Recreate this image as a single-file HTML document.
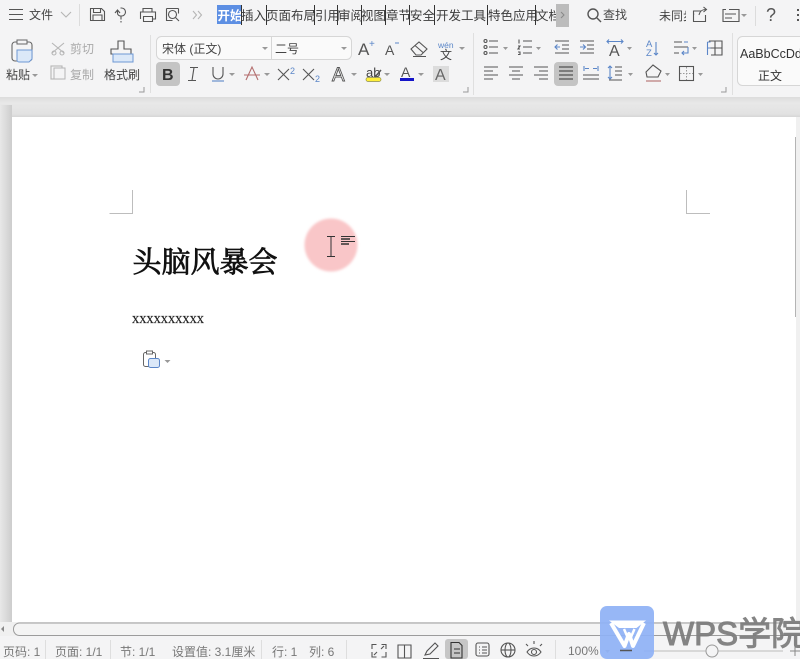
<!DOCTYPE html>
<html lang="zh">
<head>
<meta charset="utf-8">
<style>
html,body{margin:0;padding:0;background:#fff}
body{width:800px;height:659px;overflow:hidden;position:relative}
svg{position:absolute;left:0;top:0;display:block;font-size:12px}
text{font-family:"Liberation Sans","Noto Sans CJK SC",sans-serif;fill:#444}
.i{fill:none;stroke:#555;stroke-width:1.1}
.b{fill:none;stroke:#5b86c8;stroke-width:1.1}
.g{fill:none;stroke:#b5b5b5;stroke-width:1.1}
.tab{font-size:12.5px;fill:#3a3a3a}
.sb{font-size:12px;fill:#777}
.d{fill:#999;stroke:none}
</style>
</head>
<body>
<svg width="800" height="659" viewBox="0 0 800 659" xmlns="http://www.w3.org/2000/svg">
<defs>
<linearGradient id="lg" x1="0" x2="1" y1="0" y2="0"><stop offset="0" stop-color="#e8e8e8"/><stop offset="1" stop-color="#cdcdcd"/></linearGradient>
<linearGradient id="sh" x1="0" x2="0" y1="0" y2="1"><stop offset="0" stop-color="#dcdcdc"/><stop offset=".3" stop-color="#e8e8e8"/><stop offset=".85" stop-color="#e2e2e2"/><stop offset="1" stop-color="#d6d6d6"/></linearGradient>
<filter id="bl" x="-20%" y="-20%" width="140%" height="140%"><feGaussianBlur stdDeviation="1.200"/></filter>
<clipPath id="tabclip"><rect x="530" y="0" width="26" height="30"/></clipPath>
</defs>

<!-- backgrounds -->
<rect width="800" height="659" fill="#e8e8e8"/>
<rect width="800" height="98" fill="#f4f4f5"/>
<rect y="97" width="800" height="20" fill="url(#sh)"/>
<rect y="105" width="12" height="517" fill="url(#lg)"/>
<rect x="12" y="117" width="784" height="505" fill="#fff"/>
<rect x="796" y="117" width="4" height="505" fill="#f0f0f0"/>
<path d="M795.500 137V317" stroke="#b4b4b4"/>

<!-- top row -->
<path class="i" d="M9 9.500H23M9 14.500H23M9 19.500H23"/>
<text x="29" y="19">文件</text>
<path class="g" d="M61 12l5 5 5-5"/>
<path d="M79.500 4V26" stroke="#dcdcdc"/>
<path class="i" d="M90.500 8.500h11l3 3v9h-14zM93.500 8.500v4h7v-4M93 20v-5h9v5"/>
<path class="i" d="M115 13l2.500-3 2.500 3M117.500 10v3a3 3 0 0 0 3 3h1a4 4 0 0 0 0-8h-1M121 16v3.500M121 21v1.500"/>
<path class="i" d="M143 12V8.500h9V12M140.500 19v-7h15v7h-3M143.500 16.500h9v5h-9z"/>
<path class="i" d="M166.500 8.500h12M166.500 8.500v12h6M178.500 8.500v5"/>
<circle class="i" cx="172.500" cy="14.500" r="4"/>
<path class="i" d="M175.500 17.500l3.500 3.500"/>
<path class="g" d="M193 11l3.500 4-3.500 4M198 11l3.500 4-3.500 4"/>

<!-- tabs -->
<rect x="217" y="5" width="24" height="19" fill="#5d8fe3"/>
<text x="217.500" y="20" class="tab" style="fill:#fff;font-weight:bold">开始</text>
<text x="241" y="20" class="tab">插入</text>
<text x="266" y="20" class="tab">页面布局</text>
<text x="315" y="20" class="tab">引用</text>
<text x="338" y="20" class="tab">审阅</text>
<text x="361" y="20" class="tab">视图</text>
<text x="386" y="20" class="tab">章节</text>
<text x="410" y="20" class="tab">安全</text>
<text x="436" y="20" class="tab">开发工具</text>
<text x="488" y="20" class="tab">特色应用</text>
<g clip-path="url(#tabclip)"><text x="536" y="20" class="tab">文档</text></g>
<path stroke="#333" stroke-width="1" d="M241.500 5V25M266.500 5V25M314.500 5V25M337.500 5V25M361.500 5V25M385.500 5V25M409.500 5V25M434.500 5V25M487.500 5V25M535.500 5V25"/>
<rect x="556" y="4" width="13" height="23" fill="#bcbcbc"/>
<path d="M561 12l3 3-3 3" fill="none" stroke="#888"/>

<circle cx="593" cy="14" r="5" fill="none" stroke="#555" stroke-width="1.400"/>
<path fill="none" stroke="#555" stroke-width="1.400" d="M597 18l4 4"/>
<text x="603" y="19">查找</text>
<text x="659" y="20">未同步</text>
<rect x="686" y="0" width="7" height="30" fill="#f4f4f5"/>
<path class="i" d="M701 11h-7.500v10.500h12V15M699 15c1-4 3-5.500 7-5.500M703.500 7l3 2.500-3 2.500"/>
<path class="i" d="M726 9.500h-3v2M723 9v12.500h16V9.500h-10M725 14h11M725 18h7"/>
<path class="d" d="M741 14h6l-3 3z"/>
<path d="M755.500 6V26" stroke="#dcdcdc"/>
<text x="766" y="21" font-size="18" style="fill:#555">?</text>
<path stroke="#555" stroke-width="2" stroke-dasharray="2 3" d="M798 9V24"/>

<!-- clipboard group -->
<rect x="12" y="42" width="20" height="19" rx="3" fill="none" stroke="#666" stroke-width="1.100"/>
<rect x="17" y="40" width="10" height="4" fill="#f4f4f5" stroke="#666"/>
<path d="M17 50h15v9l-3 3H19a2 2 0 0 1-2-2z" fill="#dbe8f8" stroke="#6e98d4"/>
<text x="6" y="79">粘贴</text>
<path class="d" d="M32 74h6l-3 3z"/>
<path class="g" d="M52 43l12 10M64 43l-12 10"/>
<circle class="g" cx="54" cy="53" r="2"/><circle class="g" cx="62" cy="53" r="2"/>
<text x="70" y="53" style="fill:#aaa">剪切</text>
<rect class="g" x="51" y="66" width="11" height="13"/>
<rect x="54" y="68" width="11" height="11" fill="#f4f4f5" stroke="#b5b5b5"/>
<text x="70" y="79" style="fill:#aaa">复制</text>
<path class="i" d="M118 41h6v8h7v5h-20v-5h7z"/>
<rect x="113" y="54" width="20" height="8" fill="#dbe8f8" stroke="#6e98d4"/>
<text x="104" y="79">格式刷</text>
<path d="M139 92h5v-5" fill="none" stroke="#999"/>
<path d="M150.500 35V93" stroke="#dfdfdf"/>

<!-- font -->
<rect x="156.500" y="36.500" width="195" height="23" rx="5" fill="#fafafa" stroke="#d6d6d6"/>
<path d="M271.500 37V59" stroke="#d6d6d6"/>
<text x="162" y="53">宋体 (正文)</text>
<path class="d" d="M262 47h6l-3 3z"/>
<text x="275" y="53">二号</text>
<path class="d" d="M341 47h6l-3 3z"/>
<text x="358" y="55" font-size="17" style="fill:#555">A</text>
<text x="369" y="47" font-size="10" style="fill:#5b86c8">+</text>
<text x="385" y="55" font-size="14" style="fill:#555">A</text>
<path d="M395 43h4" stroke="#5b86c8"/>
<path class="i" d="M411 49l8-7 8 7-6 6h-5zM415 45.500l8 7M413 56.500h13"/>
<text x="438" y="48" font-size="8.500" style="fill:#5b86c8">wén</text>
<text x="440" y="59" font-size="12">文</text>
<path class="d" d="M459 47h6l-3 3z"/>

<rect x="156" y="62" width="24" height="24" rx="4" fill="#c4c4c4"/>
<text x="162" y="80" font-size="16" font-weight="bold" style="fill:#333">B</text>
<path class="i" d="M190 67.500h8M188 80.500h8M194 67.500l-2 13"/>
<path class="i" d="M213 67v7a5 5 0 0 0 10 0v-7"/><path class="b" d="M212 81h12"/>
<path class="d" d="M229 73h6l-3 3z"/>
<path class="i" d="M246 80l6-13 6 13M244 75h16" style="stroke:#b36d6d"/>
<path class="d" d="M264 73h6l-3 3z"/>
<path class="i" d="M278 69l11 11M289 69l-11 11"/>
<text x="290" y="74" font-size="9" style="fill:#5b86c8">2</text>
<path class="i" d="M303 69l11 11M314 69l-11 11"/>
<text x="315" y="82" font-size="9" style="fill:#5b86c8">2</text>
<text x="332" y="81" font-size="19" style="fill:#fff;stroke:#555;stroke-width:.9">A</text>
<path class="d" d="M351 73h6l-3 3z"/>
<text x="366" y="77" font-size="13">ab</text>
<path stroke="#555" stroke-width="1.500" d="M375 77l6-7"/>
<rect x="366" y="77.500" width="15" height="4" rx="2" fill="#ffef3a" stroke="#8a8a50" stroke-width=".7"/>
<path class="d" d="M384 73h6l-3 3z"/>
<text x="401" y="77" font-size="14" style="fill:#555">A</text>
<rect x="400" y="78" width="14" height="3" fill="#1414c8"/>
<path class="d" d="M418 73h6l-3 3z"/>
<rect x="433" y="66" width="16" height="16" fill="#dcdcdc"/>
<text x="435" y="80" font-size="16" style="fill:#666">A</text>
<path d="M463 92h5v-5" fill="none" stroke="#999"/>
<path d="M473.500 33V95" stroke="#dfdfdf"/>

<!-- paragraph row 1 -->
<circle cx="485.500" cy="41" r="1.500" class="i"/><circle cx="485.500" cy="47" r="1.500" class="i"/><circle cx="485.500" cy="53" r="1.500" class="i"/>
<path class="i" d="M489 41h9M489 47h9M489 53h9"/>
<path class="d" d="M503 47h5l-2.500 3z"/>
<path class="i" d="M519 39.500v4M518 46h2l-2 3h2M518 52h2v2.500h-2M523 41h9M523 47h9M523 53h9"/>
<path class="d" d="M536 47h5l-2.500 3z"/>
<path class="i" d="M555 41h14M562 45h7M562 49h7M555 53h14"/><path class="b" d="M555 47h5M557.500 44.500l-2.500 2.500 2.500 2.500"/>
<path class="i" d="M580 41h14M587 45h7M587 49h7M580 53h14"/><path class="b" d="M580 47h5M583 44.500l2.500 2.500-2.500 2.500"/>
<text x="609" y="56" font-size="16" style="fill:#555">A</text>
<path class="b" d="M607 41.500h16M609 39.500l-2 2 2 2M621 39.500l2 2-2 2"/>
<path class="d" d="M627 47h5l-2.500 3z"/>
<text x="646" y="47" font-size="9.500" style="fill:#5b86c8">A</text>
<text x="646" y="56" font-size="9.500" style="fill:#5b86c8">Z</text>
<path class="b" d="M656 42v13M654 53l2 2 2-2"/>
<path class="i" d="M674 42h8M674 47h14M674 53h5"/><path class="b" d="M684 42h4M688 47v6h-6M684 51l-2 2 2 2"/>
<path class="d" d="M692 47h5l-2.500 3z"/>
<path class="i" d="M709 41h13v14h-11M715 41v14M709 48h13"/><path class="b" d="M707.500 42v13M707.500 48h3M707.500 42h3"/>

<!-- paragraph row 2 -->
<path class="i" d="M484 67h14M484 71h9M484 75h14M484 79h9"/>
<path class="i" d="M509 67h14M512 71h8M509 75h14M512 79h8"/>
<path class="i" d="M534 67h14M539 71h9M534 75h14M539 79h9"/>
<rect x="554" y="62" width="24" height="24" rx="4" fill="#c4c4c4"/>
<path fill="none" stroke="#333" stroke-width="1.100" d="M559 67h14M559 71h14M559 75h14M559 79h14"/>
<path class="b" d="M584 66v5M598 66v5M585 68.500h4M593 68.500h4"/>
<path class="i" d="M583 75h16M583 79h16"/>
<path class="b" d="M610 66v13M608 68l2-2 2 2M608 77l2 2 2-2"/>
<path class="i" d="M615 67h7M615 71h7M615 75h7M609 80h13"/>
<path class="d" d="M628 73h5l-2.500 3z"/>
<path class="i" d="M646 72l7-7 8 6-3 6h-11z"/>
<path class="i" d="M646 81h15" style="stroke:#b36d6d"/>
<path class="d" d="M665 73h5l-2.500 3z"/>
<rect class="i" x="679.500" y="66.500" width="14" height="14"/>
<path fill="none" stroke="#999" stroke-dasharray="1.500 1.500" d="M686.500 67v13M680 73.500h13"/>
<path class="d" d="M698 73h5l-2.500 3z"/>
<path d="M721 92h5v-5" fill="none" stroke="#999"/>
<path d="M732.500 33V95" stroke="#dfdfdf"/>

<!-- style preview -->
<rect x="737.500" y="36.500" width="70" height="49" rx="5" fill="#fafafa" stroke="#d6d6d6"/>
<text x="740" y="58" font-size="12.500" style="fill:#333">AaBbCcDd</text>
<text x="758" y="80" style="fill:#333">正文</text>

<!-- margin marks -->
<path d="M109.500 213.500H132.500V190" fill="none" stroke="#bdbdbd"/>
<path d="M710 213.500H686.500V190" fill="none" stroke="#bdbdbd"/>

<!-- document -->
<text x="132.500" y="272" style="font-family:'Liberation Serif','Noto Serif CJK SC',serif;font-size:29px;fill:#111;stroke:#111;stroke-width:.8">头脑风暴会</text>
<text x="132" y="323" style="font-family:'Liberation Serif',serif;font-size:14.400px;fill:#222;stroke:#222;stroke-width:.15">xxxxxxxxxx</text>

<!-- pink cursor -->
<circle cx="331" cy="245" r="26.500" fill="#f9c6c8" filter="url(#bl)"/>
<path d="M327 236.500h8M331 236.500V256.500M327 256.500h8" fill="none" stroke="#333"/>
<path d="M341 236.500h14M341 241.500h14" stroke="#333" fill="none"/>
<path d="M341 239h9M341 244h8" stroke="#333" stroke-width="1.600" fill="none"/>

<!-- paste icon -->
<rect x="143.500" y="352.500" width="12" height="14" rx="2" fill="none" stroke="#666"/>
<rect x="146.500" y="351" width="6" height="3" fill="#fff" stroke="#666"/>
<rect x="148.500" y="358.500" width="11" height="9" rx="2" fill="#dbe8f8" stroke="#5b86c8"/>
<path class="d" d="M164.500 360h6l-3 3z"/>

<!-- horizontal scrollbar -->
<rect y="622" width="800" height="15" fill="#f0f0f0"/>
<rect x="13.500" y="623" width="790" height="12.500" rx="6" fill="#f4f4f4" stroke="#9c9c9c"/>
<path d="M4 626v6l-3-3z" fill="#888"/>
<rect y="636" width="800" height="23" fill="#f4f4f5"/>

<!-- status bar -->
<text x="3" y="656" class="sb">页码: 1</text>
<path d="M45.500 640V659M110.500 640V659M261.500 640V659M346.500 640V659" stroke="#dedede"/>
<text x="55" y="656" class="sb">页面: 1/1</text>
<text x="120" y="656" class="sb">节: 1/1</text>
<text x="172" y="656" class="sb">设置值: 3.1厘米</text>
<text x="272" y="656" class="sb">行: 1</text>
<text x="309" y="656" class="sb">列: 6</text>
<path class="i" d="M372 649v-4.500h4.500M386 649v-4.500h-4.500M372 652v5h4.500M386 652v5h-4.500M374 655l3-3M384 646l-3 3"/>
<path class="i" d="M398 645h6.500v13h-6.500zM404.500 645h6.500v13h-6.500z"/>
<path class="i" d="M425 655l2-4 8-8 3 3-8 8zM423 658.500h16"/>
<rect x="445" y="639" width="23" height="20" rx="3" fill="#c6c6c6"/>
<path fill="none" stroke="#333" stroke-width="1.100" d="M451 642.500h8l3 3V658h-11zM454 649h6M454 653h6"/>
<rect class="i" x="476" y="643" width="13" height="13" rx="2"/>
<path class="i" d="M479 647h1M482 647h5M479 650h1M482 650h5M479 653h1M482 653h5"/>
<circle class="i" cx="508" cy="650" r="7"/>
<ellipse class="i" cx="508" cy="650" rx="3" ry="7"/>
<path class="i" d="M501 650h14"/>
<path class="i" d="M527 652c2-3 5-4 7-4s5 1 7 4c-2 3-5 4-7 4s-5-1-7-4z"/>
<circle class="i" cx="534" cy="652" r="2.500"/>
<path class="i" d="M534 644v-3M528 646l-2-2M540 646l2-2"/>
<path d="M555.500 640V659" stroke="#dedede"/>
<text x="568" y="655" class="sb">100%</text>
<path class="d" d="M605 650h5l-2.500 3z"/>
<path d="M644 651H783" stroke="#bbb"/>
<circle cx="712" cy="651" r="6" fill="#f4f4f5" stroke="#999"/>
<path d="M790 651h10M795 646v10" stroke="#888"/>

<!-- WPS watermark -->
<rect x="600" y="606" width="54" height="53" rx="7" fill="#8fb2f5" fill-opacity=".93"/>
<path d="M620 650.500h12" stroke="#555" stroke-width="1.500"/>
<path d="M609 620.500H646L636.500 628H619Z" fill="#fff"/>
<path d="M611 623L624.500 646L629 634L633 646L644 623" fill="none" stroke="#fff" stroke-width="4" stroke-linejoin="round"/>
<path d="M624 629L627.500 637M634.500 629L631 637" stroke="#fff" stroke-width="2.500"/>
<text x="663" y="645" style="font-size:33px;fill:#7c7c7c;stroke:#7c7c7c;stroke-width:1;opacity:.93">WPS学院</text>
</svg>
</body>
</html>
